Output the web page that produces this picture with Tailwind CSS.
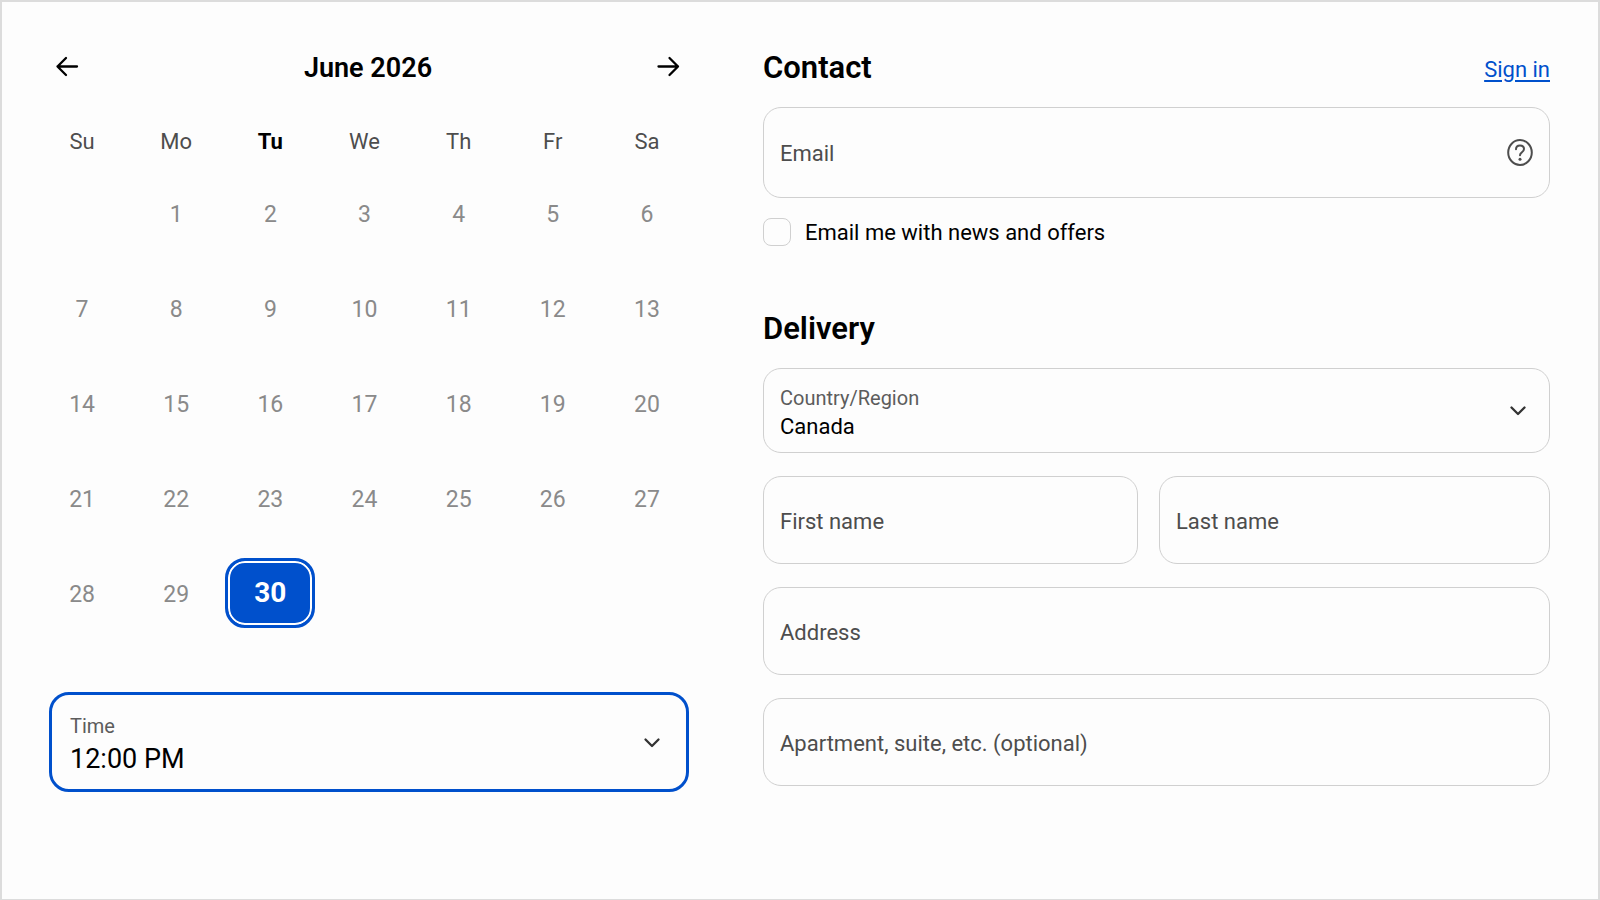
<!DOCTYPE html>
<html lang="en">
<head>
    <meta charset="UTF-8">
    <meta name="viewport" content="width=device-width, initial-scale=1.0">
    <title>Book a time</title>
    <script src="https://cdn.jsdelivr.net/npm/@tailwindcss/browser@4"></script>
</head>
<body class="bg-[#fdfdfd] font-['Roboto',sans-serif] text-black">

    <main class="min-h-screen border-2 border-b border-[#dcdcdc] pt-11 pl-[47px] pr-12 pb-12 grid grid-cols-1 lg:grid-cols-[640fr_787fr] gap-[74px] items-start">

        <!-- Date and time -->
        <section>
            <div class="flex items-center justify-between h-11 pl-1 pr-1.5">
                <button type="button" aria-label="Previous month" class="p-0.5">
                    <svg class="size-6" viewBox="0 0 24 24" fill="none" stroke="currentColor" stroke-width="2.3" stroke-linecap="round" stroke-linejoin="round"><path d="M22 10.500H2.500M11 2l-8.500 8.500L11 19"/></svg>
                </button>
                <h2 class="text-[27px] font-semibold">June 2026</h2>
                <button type="button" aria-label="Next month" class="p-0.5">
                    <svg class="size-6" viewBox="0 0 24 24" fill="none" stroke="currentColor" stroke-width="2.3" stroke-linecap="round" stroke-linejoin="round"><path d="M1.500 10.500h19.500M12.500 2l8.500 8.500-8.500 8.500"/></svg>
                </button>
            </div>

            <div class="-ml-3.5 -mr-[5px]">
                <table class="mt-[27px] w-full table-fixed text-center">
                    <thead>
                        <tr class="h-12 text-[22px] text-[#4d4d4d]">
                            <th class="font-normal">Su</th>
                            <th class="font-normal">Mo</th>
                            <th class="font-bold text-black">Tu</th>
                            <th class="font-normal">We</th>
                            <th class="font-normal">Th</th>
                            <th class="font-normal">Fr</th>
                            <th class="font-normal">Sa</th>
                        </tr>
                    </thead>
                    <tbody id="days" class="text-[23px] text-[#8a8a8a]"></tbody>
                </table>
            </div>

            <div class="relative mt-[52px]">
                <label for="time" class="absolute left-[21px] top-[22px] text-xl leading-6 text-[#5c5c5c] pointer-events-none">Time</label>
                <select id="time" class="block w-full h-[100px] appearance-none rounded-[20px] border-[3px] border-[#0050cc] bg-transparent pl-[18px] pr-14 pt-[34px] text-[27px] outline-none">
                    <option>12:00 PM</option>
                    <option>12:30 PM</option>
                    <option>1:00 PM</option>
                </select>
                <svg class="absolute right-[27px] top-10 size-5 pointer-events-none text-[#333]" viewBox="0 0 20 20" fill="none" stroke="currentColor" stroke-width="2.300" stroke-linecap="round" stroke-linejoin="round"><path d="M3.500 7.500l6.500 6.500 6.500-6.500"/></svg>
            </div>
        </section>

        <!-- Checkout form -->
        <form class="text-[22px]">
            <div class="flex items-center justify-between h-11 mb-[17px]">
                <h2 class="text-[31px] font-semibold">Contact</h2>
                <a href="#" class="pt-0.5 text-[#0050cc] underline underline-offset-3">Sign in</a>
            </div>

            <div class="relative">
                <input id="email" type="email" placeholder=" " class="peer block w-full h-[91px] rounded-[18px] border border-[#d0d0d0] px-4">
                <label for="email" class="absolute inset-y-0 left-[17px] flex items-center pt-0.5 text-[#4d4d4d] pointer-events-none peer-[:not(:placeholder-shown)]:hidden">Email</label>
                <button type="button" aria-label="Help" class="absolute right-4 top-8 text-[#4d4d4d]">
                    <svg class="size-7" viewBox="0 0 28 28" fill="none" stroke="currentColor" stroke-width="2" stroke-linecap="round"><ellipse cx="14" cy="13.500" rx="11.800" ry="12.400"/><path d="M10 10.300c0-2.300 1.700-3.800 4-3.800s4 1.500 4 3.600c0 3.200-4 3.200-4 6.200"/><circle cx="14" cy="20.200" r="1.500" fill="currentColor" stroke="none"/></svg>
                </button>
            </div>

            <div class="mt-4 flex items-center gap-3.5">
                <input id="news" type="checkbox" class="appearance-none size-7 rounded-lg border border-[#d0d0d0] checked:bg-[#0050cc]">
                <label for="news" class="pt-0.5">Email me with news and offers</label>
            </div>

            <h2 class="mt-[58px] mb-[17px] h-11 text-[31px] leading-11 font-semibold">Delivery</h2>

            <div class="space-y-[23px]">
                <div class="relative">
                    <label for="country" class="absolute left-[17px] top-[18px] text-xl leading-6 text-[#5c5c5c] pointer-events-none">Country/Region</label>
                    <select id="country" class="block w-full h-[85px] appearance-none rounded-[18px] border border-[#d0d0d0] bg-transparent pl-4 pr-14 pt-[31px]">
                        <option>Canada</option>
                        <option>United States</option>
                    </select>
                    <svg class="absolute right-[22px] top-8 size-5 pointer-events-none text-[#333]" viewBox="0 0 20 20" fill="none" stroke="currentColor" stroke-width="2.300" stroke-linecap="round" stroke-linejoin="round"><path d="M3.500 7.500l6.500 6.500 6.500-6.500"/></svg>
                </div>

                <div class="grid grid-cols-[375fr_391fr] gap-[21px]">
                    <div class="relative">
                        <input id="first-name" type="text" placeholder=" " class="peer block w-full h-[88px] rounded-[18px] border border-[#d0d0d0] px-4">
                        <label for="first-name" class="absolute inset-y-0 left-[17px] flex items-center pt-0.5 text-[#4d4d4d] pointer-events-none peer-[:not(:placeholder-shown)]:hidden">First name</label>
                    </div>
                    <div class="relative">
                        <input id="last-name" type="text" placeholder=" " class="peer block w-full h-[88px] rounded-[18px] border border-[#d0d0d0] px-4">
                        <label for="last-name" class="absolute inset-y-0 left-[17px] flex items-center pt-0.5 text-[#4d4d4d] pointer-events-none peer-[:not(:placeholder-shown)]:hidden">Last name</label>
                    </div>
                </div>

                <div class="relative">
                    <input id="address" type="text" placeholder=" " class="peer block w-full h-[88px] rounded-[18px] border border-[#d0d0d0] px-4">
                    <label for="address" class="absolute inset-y-0 left-[17px] flex items-center pt-0.5 text-[#4d4d4d] pointer-events-none peer-[:not(:placeholder-shown)]:hidden">Address</label>
                </div>

                <div class="relative">
                    <input id="apartment" type="text" placeholder=" " class="peer block w-full h-[88px] rounded-[18px] border border-[#d0d0d0] px-4">
                    <label for="apartment" class="absolute inset-y-0 left-[17px] flex items-center pt-0.5 text-[#4d4d4d] pointer-events-none peer-[:not(:placeholder-shown)]:hidden">Apartment, suite, etc. (optional)</label>
                </div>
            </div>
        </form>
    </main>

    <script>
        const firstWeekday = 1;
        const daysInMonth = 30;
        const selected = 30;

        const dayClass = "px-3 pt-3.5 pb-2";
        const selectedClass = "block mx-auto w-[90px] h-[70px] rounded-[20px] border-[3px] border-[#0050cc] bg-[#0050cc] text-white text-[28px] font-bold ring-2 ring-inset ring-white";

        let html = "";
        for (let cell = 0; cell < 35; cell++) {
            const day = cell - firstWeekday + 1;
            if (cell % 7 === 0) html += '<tr class="h-[95px]">';
            html += '<td class="p-0">';
            if (day > 0 && day <= daysInMonth) {
                html += `<button type="button" class="${day === selected ? selectedClass : dayClass}">${day}</button>`;
            }
            html += "</td>";
            if (cell % 7 === 6) html += "</tr>";
        }
        document.getElementById("days").innerHTML = html;
    </script>

</body>
</html>
